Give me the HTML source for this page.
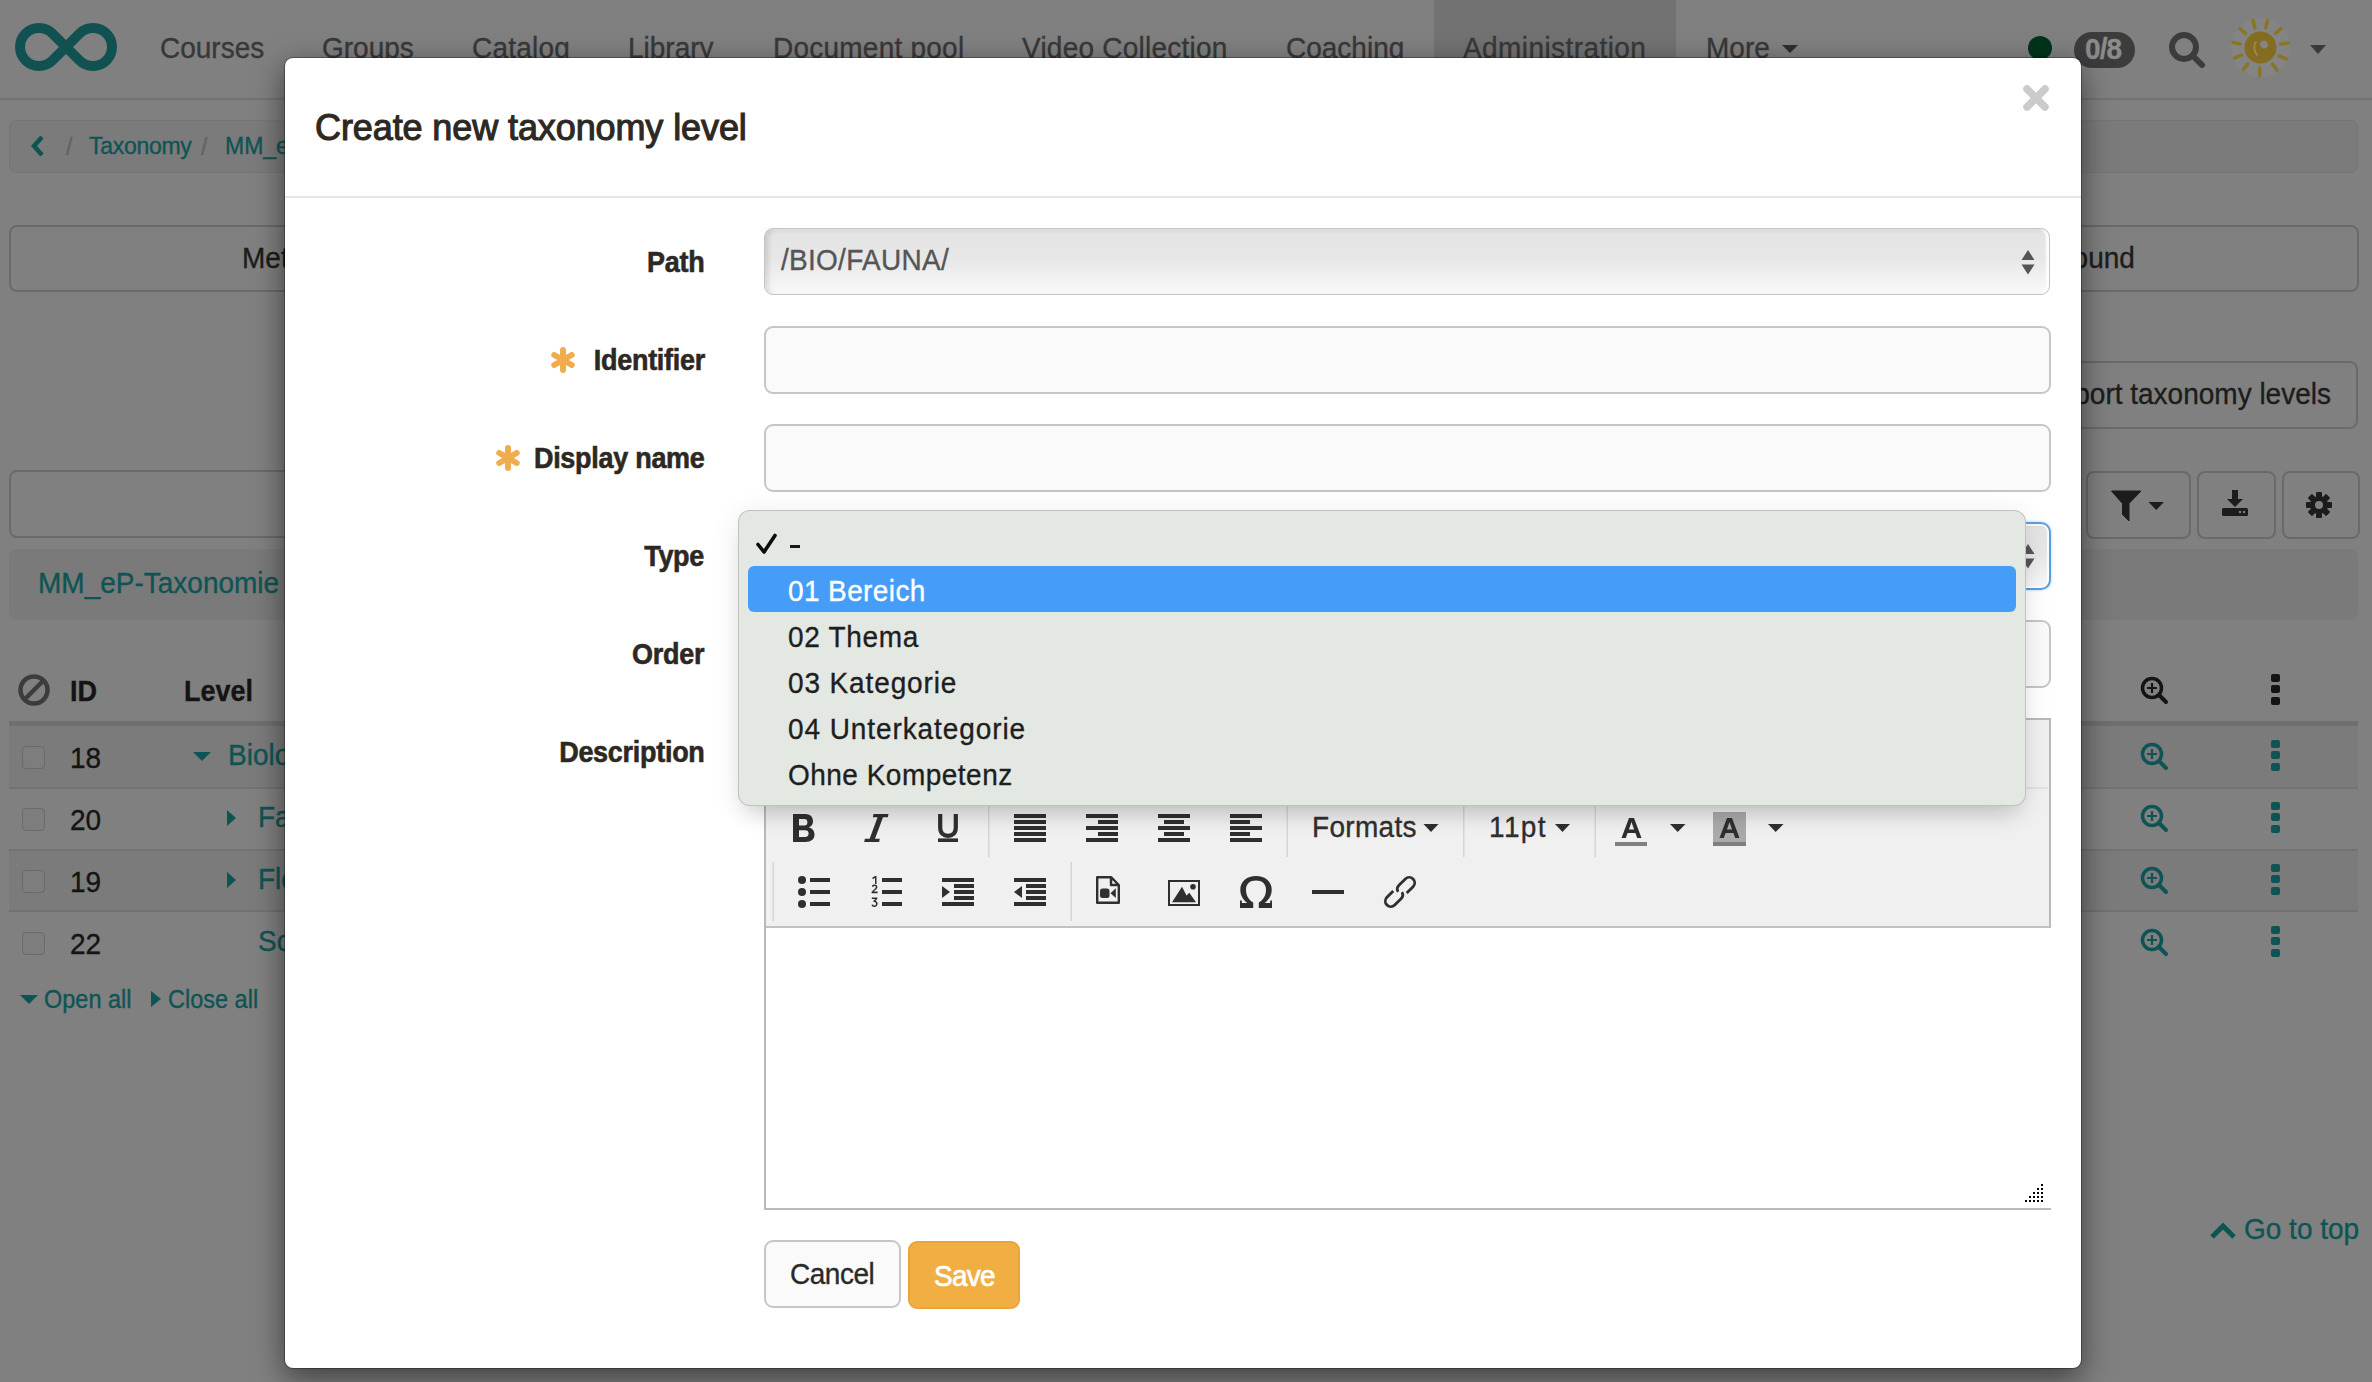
<!DOCTYPE html>
<html><head><meta charset="utf-8">
<style>
html,body{margin:0;padding:0;}
body{width:2372px;height:1382px;overflow:hidden;position:relative;background:#808080;font-family:"Liberation Sans",sans-serif;}
.a{position:absolute;}
.t{position:absolute;line-height:1;white-space:nowrap;-webkit-text-stroke:0.35px currentColor;}
#bg{position:absolute;left:0;top:0;width:2372px;height:1382px;background:#808080;}
.tl{color:#0f5454;}
.nav{font-size:29.96px;color:#383838;}
.lbl{right:1667.5px;font-size:28.89px;font-weight:700;color:#2e2823;letter-spacing:-0.3px;-webkit-text-stroke:0.6px #2e2823;}
.inp{left:764px;width:1283px;height:63.5px;border:2px solid #c6c6c6;border-radius:9px;background:#fafafa;}
.chk{left:22px;width:21px;height:21px;border:1.5px solid #6a6a6a;border-radius:4px;background:#7d7d7d;}
.num{left:70px;font-size:29.96px;color:#141414;}
.zm{left:2140px;}
.kb{left:2271px;width:9px;}
.kb i{display:block;width:9px;height:8px;border-radius:2px;background:currentColor;margin-bottom:3.3px;}
.dd{left:788px;font-size:29.96px;color:#1e1e1e;}
</style></head><body>
<div id="bg">
  <!-- navbar -->
  <div class="a" style="left:1434px;top:0;width:242px;height:97px;background:#727272"></div>
  <div class="a" style="left:0;top:98px;width:2372px;height:2px;background:#737373"></div>
  <svg class="a" style="left:0;top:0" width="130" height="96" viewBox="0 0 130 96">
    <path d="M52.4,33.5 L79.6,60.5 A19,19 0 1 0 79.6,33.5 L52.4,60.5 A19,19 0 1 1 52.4,33.5 Z" fill="none" stroke="#115151" stroke-width="10" stroke-linejoin="round"/>
  </svg>
  <div class="t nav" style="left:160px;top:35px;transform:scaleX(0.9346);transform-origin:left 0;margin-top:-0.0554em">Courses</div>
  <div class="t nav" style="left:322px;top:35px;transform:scaleX(0.9346);transform-origin:left 0;margin-top:-0.0554em">Groups</div>
  <div class="t nav" style="letter-spacing:0.25px;left:472px;top:35px;transform:scaleX(0.9346);transform-origin:left 0;margin-top:-0.0554em">Catalog</div>
  <div class="t nav" style="left:628px;top:35px;transform:scaleX(0.9346);transform-origin:left 0;margin-top:-0.0554em">Library</div>
  <div class="t nav" style="letter-spacing:0.25px;left:773px;top:35px;transform:scaleX(0.9346);transform-origin:left 0;margin-top:-0.0554em">Document pool</div>
  <div class="t nav" style="letter-spacing:0.25px;left:1022px;top:35px;transform:scaleX(0.9346);transform-origin:left 0;margin-top:-0.0554em">Video Collection</div>
  <div class="t nav" style="left:1286px;top:35px;transform:scaleX(0.9346);transform-origin:left 0;margin-top:-0.0554em">Coaching</div>
  <div class="t nav" style="left:1463px;top:35px;letter-spacing:0.45px;transform:scaleX(0.9346);transform-origin:left 0;margin-top:-0.0554em">Administration</div>
  <div class="t nav" style="left:1706px;top:35px;transform:scaleX(0.9346);transform-origin:left 0;margin-top:-0.0554em">More</div>
  <div class="a" style="left:1782px;top:45px;width:0;height:0;border-left:8px solid transparent;border-right:8px solid transparent;border-top:8px solid #2e2e2e"></div>
  <!-- right icons -->
  <div class="a" style="left:2028px;top:36px;width:24px;height:24px;border-radius:50%;background:#00331a"></div>
  <div class="a" style="left:2074px;top:32px;width:61px;height:36px;border-radius:18px;background:#3c3c3c"></div>
  <div class="t" style="left:2085px;top:36px;font-size:29.96px;font-weight:700;color:#8c8c8c;letter-spacing:-1px;transform:scaleX(0.9346);transform-origin:left 0;margin-top:-0.0554em">0/8</div>
  <svg class="a" style="left:2165px;top:28px" width="45" height="45" viewBox="0 0 45 45">
    <circle cx="19" cy="19" r="12" fill="none" stroke="#3c3c3c" stroke-width="6"/>
    <line x1="28" y1="28" x2="37" y2="37" stroke="#3c3c3c" stroke-width="6" stroke-linecap="round"/>
  </svg>
  <svg class="a" style="left:2225px;top:12px" width="72" height="72" viewBox="0 0 72 72">
    <circle cx="35.5" cy="35.5" r="29.5" fill="#848484"/>
    <g stroke="#8a7427" stroke-width="3.4" stroke-linecap="round"><line x1="30.0" y1="15.8" x2="28.0" y2="8.5"/><line x1="40.7" y1="15.7" x2="42.6" y2="8.4"/><line x1="20.4" y1="21.6" x2="14.9" y2="16.6"/><line x1="50.5" y1="21.5" x2="56.0" y2="16.4"/><line x1="15.3" y1="31.8" x2="8.0" y2="30.5"/><line x1="55.7" y1="32.2" x2="63.1" y2="31.0"/><line x1="16.5" y1="43.2" x2="9.5" y2="46.0"/><line x1="54.2" y1="43.9" x2="61.1" y2="46.9"/><line x1="22.9" y1="51.7" x2="18.3" y2="57.6"/><line x1="47.5" y1="52.1" x2="51.9" y2="58.2"/><line x1="34.9" y1="56.0" x2="34.6" y2="63.5"/></g>
    <circle cx="35.5" cy="35.5" r="16" fill="#846c21"/>
    <path d="M36.5,29.5 C39,28 42.5,29 43,32.5 C43.5,35.5 40.5,37.5 37.5,36 C35.5,35 35,33.5 34.5,32 Z" fill="#858585"/>
    <path d="M31,30 C28.5,33 28.5,38.5 32,43" fill="none" stroke="#9c8d5a" stroke-width="1.6" stroke-linecap="round"/>
  </svg>
  <div class="a" style="left:2310px;top:45px;width:0;height:0;border-left:8px solid transparent;border-right:8px solid transparent;border-top:9px solid #3a3a3a"></div>

  <!-- breadcrumb -->
  <div class="a" style="left:9px;top:120px;width:2347px;height:51px;border:1.5px solid #767676;border-radius:7px;background:#7b7b7b"></div>
  <svg class="a" style="left:28px;top:134px" width="20" height="24" viewBox="0 0 20 24">
    <path d="M14,3 L6,12 L14,21" fill="none" stroke="#0f5454" stroke-width="4.5"/>
  </svg>
  <div class="t" style="left:66px;top:136px;font-size:24.61px;color:#636363;transform:scaleX(0.9346);transform-origin:left 0;margin-top:-0.0554em">/</div>
  <div class="t tl" style="left:88.5px;top:135px;font-size:24.61px;letter-spacing:-0.3px;transform:scaleX(0.9346);transform-origin:left 0;margin-top:-0.0554em">Taxonomy</div>
  <div class="t" style="left:201px;top:136px;font-size:24.61px;color:#636363;transform:scaleX(0.9346);transform-origin:left 0;margin-top:-0.0554em">/</div>
  <div class="t tl" style="left:225px;top:135px;font-size:24.61px;transform:scaleX(0.9346);transform-origin:left 0;margin-top:-0.0554em">MM_eP-Taxonomie</div>

  <!-- button group -->
  <div class="a" style="left:9px;top:225px;width:2346px;height:63px;border:2px solid #6a6a6a;border-radius:8px"></div>
  <div class="t" style="left:242px;top:244.3px;font-size:29.96px;color:#1c1c1c;transform:scaleX(0.9346);transform-origin:left 0;margin-top:-0.0554em">Metadata</div>
  <div class="t" style="right:237px;top:244.3px;font-size:29.96px;color:#1c1c1c;transform:scaleX(0.9346);transform-origin:right 0;margin-top:-0.0554em">Background</div>

  <!-- import button -->
  <div class="a" style="left:1950px;top:361px;width:404px;height:64px;border:2px solid #6a6a6a;border-radius:8px"></div>
  <div class="t" style="right:41px;top:380.3px;font-size:29.96px;color:#1c1c1c;transform:scaleX(0.9346);transform-origin:right 0;margin-top:-0.0554em">Import taxonomy levels</div>

  <!-- search row -->
  <div class="a" style="left:9px;top:470px;width:2000px;height:64px;border:2px solid #6a6a6a;border-radius:8px"></div>
  <div class="a" style="left:2086px;top:471px;width:101px;height:64px;border:2px solid #6a6a6a;border-radius:8px"></div>
  <div class="a" style="left:2197px;top:471px;width:75px;height:64px;border:2px solid #6a6a6a;border-radius:8px"></div>
  <div class="a" style="left:2282px;top:471px;width:74px;height:64px;border:2px solid #6a6a6a;border-radius:8px"></div>
  <svg class="a" style="left:2108px;top:488px" width="60" height="34" viewBox="0 0 60 34">
    <path d="M3.5,3 L33,3 L21,15.5 L21,33 L14.5,26.5 L14.5,15.5 Z" fill="#1c1c1c" stroke="#1c1c1c" stroke-width="1" stroke-linejoin="round"/>
    <path d="M40.5,14 L56,14 L48.2,22 Z" fill="#1c1c1c"/>
  </svg>
  <svg class="a" style="left:2220px;top:489px" width="30" height="30" viewBox="0 0 30 30">
    <path d="M12,1 L18,1 L18,10 L23,10 L15,18 L7,10 L12,10 Z" fill="#1c1c1c"/>
    <rect x="2" y="19" width="26" height="8" rx="1.5" fill="#1c1c1c"/>
    <circle cx="20" cy="23" r="1.2" fill="#808080"/><circle cx="24" cy="23" r="1.2" fill="#808080"/>
  </svg>
  <svg class="a" style="left:2304px;top:490px" width="30" height="30" viewBox="0 0 30 30">
    <g fill="#1c1c1c">
      <circle cx="15" cy="15" r="9"/>
      <rect x="12" y="2" width="6" height="26" rx="1"/>
      <rect x="2" y="12" width="26" height="6" rx="1"/>
      <rect x="12" y="2" width="6" height="26" rx="1" transform="rotate(45 15 15)"/>
      <rect x="12" y="2" width="6" height="26" rx="1" transform="rotate(-45 15 15)"/>
    </g>
    <circle cx="15" cy="15" r="4" fill="#808080"/>
  </svg>

  <!-- gray bar -->
  <div class="a" style="left:9px;top:549px;width:2349px;height:71px;border-radius:8px;background:#7a7a7a"></div>
  <div class="t tl" style="left:38px;top:570px;font-size:29.96px;transform:scaleX(0.9346);transform-origin:left 0;margin-top:-0.0554em">MM_eP-Taxonomie</div>

  <!-- table -->
  <div class="a" style="left:9px;top:726px;width:2349px;height:61px;background:#7b7b7b"></div>
  <div class="a" style="left:9px;top:849px;width:2349px;height:61px;background:#7b7b7b"></div>
  <div class="a" style="left:9px;top:721px;width:2349px;height:5px;background:#6f6f6f"></div>
  <div class="a" style="left:9px;top:787px;width:2349px;height:1.5px;background:#727272"></div>
  <div class="a" style="left:9px;top:849px;width:2349px;height:1.5px;background:#727272"></div>
  <div class="a" style="left:9px;top:910px;width:2349px;height:1.5px;background:#727272"></div>
  <svg class="a" style="left:16px;top:672px" width="36" height="36" viewBox="0 0 36 36">
    <circle cx="18" cy="18" r="13.5" fill="none" stroke="#3c3c3c" stroke-width="4.5"/>
    <line x1="9" y1="27" x2="27" y2="9" stroke="#3c3c3c" stroke-width="4.5"/>
  </svg>
  <div class="t" style="left:70px;top:678.5px;font-size:28.89px;font-weight:700;color:#141414;transform:scaleX(0.9346);transform-origin:left 0;margin-top:-0.0554em">ID</div>
  <div class="t" style="left:184px;top:678.5px;font-size:28.89px;font-weight:700;color:#141414;transform:scaleX(0.9346);transform-origin:left 0;margin-top:-0.0554em">Level</div>
  <div class="a chk" style="top:746px"></div>
  <div class="a chk" style="top:808px"></div>
  <div class="a chk" style="top:870px"></div>
  <div class="a chk" style="top:932px"></div>
  <div class="t num" style="top:744.3px;transform:scaleX(0.9346);transform-origin:left 0;margin-top:-0.0554em">18</div>
  <div class="t num" style="top:806.3px;transform:scaleX(0.9346);transform-origin:left 0;margin-top:-0.0554em">20</div>
  <div class="t num" style="top:868.3px;transform:scaleX(0.9346);transform-origin:left 0;margin-top:-0.0554em">19</div>
  <div class="t num" style="top:930.3px;transform:scaleX(0.9346);transform-origin:left 0;margin-top:-0.0554em">22</div>
  <div class="a" style="left:193px;top:752px;width:0;height:0;border-left:9px solid transparent;border-right:9px solid transparent;border-top:9px solid #0f5454"></div>
  <div class="t tl" style="left:228px;top:742px;font-size:29.96px;transform:scaleX(0.9346);transform-origin:left 0;margin-top:-0.0554em">Biologie</div>
  <div class="a" style="left:227px;top:810px;width:0;height:0;border-top:8px solid transparent;border-bottom:8px solid transparent;border-left:9px solid #0f5454"></div>
  <div class="t tl" style="left:258px;top:804px;font-size:29.96px;transform:scaleX(0.9346);transform-origin:left 0;margin-top:-0.0554em">Fauna</div>
  <div class="a" style="left:227px;top:872px;width:0;height:0;border-top:8px solid transparent;border-bottom:8px solid transparent;border-left:9px solid #0f5454"></div>
  <div class="t tl" style="left:258px;top:866px;font-size:29.96px;transform:scaleX(0.9346);transform-origin:left 0;margin-top:-0.0554em">Flora</div>
  <div class="t tl" style="left:258px;top:928px;font-size:29.96px;transform:scaleX(0.9346);transform-origin:left 0;margin-top:-0.0554em">Sonstiges</div>

  <!-- zoom & kebab -->
  <svg class="a zm" style="top:676px" width="30" height="30" viewBox="0 0 30 30"><circle cx="12" cy="12" r="9.5" fill="none" stroke="#141414" stroke-width="3.5"/><path d="M12,7 V17 M7,12 H17" stroke="#141414" stroke-width="2.2"/><line x1="19" y1="19" x2="26" y2="26" stroke="#141414" stroke-width="4" stroke-linecap="round"/></svg>
  <svg class="a zm" style="top:742px" width="30" height="30" viewBox="0 0 30 30"><circle cx="12" cy="12" r="9.5" fill="none" stroke="#0f5454" stroke-width="3.5"/><path d="M12,7 V17 M7,12 H17" stroke="#0f5454" stroke-width="2.2"/><line x1="19" y1="19" x2="26" y2="26" stroke="#0f5454" stroke-width="4" stroke-linecap="round"/></svg>
  <svg class="a zm" style="top:804px" width="30" height="30" viewBox="0 0 30 30"><circle cx="12" cy="12" r="9.5" fill="none" stroke="#0f5454" stroke-width="3.5"/><path d="M12,7 V17 M7,12 H17" stroke="#0f5454" stroke-width="2.2"/><line x1="19" y1="19" x2="26" y2="26" stroke="#0f5454" stroke-width="4" stroke-linecap="round"/></svg>
  <svg class="a zm" style="top:866px" width="30" height="30" viewBox="0 0 30 30"><circle cx="12" cy="12" r="9.5" fill="none" stroke="#0f5454" stroke-width="3.5"/><path d="M12,7 V17 M7,12 H17" stroke="#0f5454" stroke-width="2.2"/><line x1="19" y1="19" x2="26" y2="26" stroke="#0f5454" stroke-width="4" stroke-linecap="round"/></svg>
  <svg class="a zm" style="top:928px" width="30" height="30" viewBox="0 0 30 30"><circle cx="12" cy="12" r="9.5" fill="none" stroke="#0f5454" stroke-width="3.5"/><path d="M12,7 V17 M7,12 H17" stroke="#0f5454" stroke-width="2.2"/><line x1="19" y1="19" x2="26" y2="26" stroke="#0f5454" stroke-width="4" stroke-linecap="round"/></svg>
  <div class="a kb" style="top:674px;color:#141414"><i></i><i></i><i></i></div>
  <div class="a kb" style="top:740px;color:#0f5454"><i></i><i></i><i></i></div>
  <div class="a kb" style="top:802px;color:#0f5454"><i></i><i></i><i></i></div>
  <div class="a kb" style="top:864px;color:#0f5454"><i></i><i></i><i></i></div>
  <div class="a kb" style="top:926px;color:#0f5454"><i></i><i></i><i></i></div>

  <!-- open/close all -->
  <div class="a" style="left:20px;top:995px;width:0;height:0;border-left:9px solid transparent;border-right:9px solid transparent;border-top:9px solid #0f5454"></div>
  <div class="t tl" style="left:44px;top:988.5px;font-size:25.15px;transform:scaleX(0.9346);transform-origin:left 0;margin-top:-0.0554em">Open all</div>
  <div class="a" style="left:151px;top:991px;width:0;height:0;border-top:8px solid transparent;border-bottom:8px solid transparent;border-left:10px solid #0f5454"></div>
  <div class="t tl" style="left:168px;top:988.5px;font-size:25.15px;transform:scaleX(0.9346);transform-origin:left 0;margin-top:-0.0554em">Close all</div>

  <!-- go to top -->
  <svg class="a" style="left:2208px;top:1220px" width="30" height="22" viewBox="0 0 30 22">
    <path d="M4,17 L15,6 L26,17" fill="none" stroke="#0f5454" stroke-width="5"/>
  </svg>
  <div class="t tl" style="left:2244px;top:1216.1px;font-size:29.96px;transform:scaleX(0.9346);transform-origin:left 0;margin-top:-0.0554em">Go to top</div>
</div>
<div class="a" style="left:284px;top:57px;width:1796px;height:1310px;background:#fff;background-clip:padding-box;border-radius:9px;border:1.5px solid rgba(0,0,0,.3);box-shadow:0 10px 30px rgba(0,0,0,.5)"></div>
<div class="t" style="left:315px;top:109.5px;font-size:36px;font-weight:400;color:#2e2823;letter-spacing:-0.1px;-webkit-text-stroke:1.1px #2e2823">Create new taxonomy level</div>
<svg class="a" style="left:2020px;top:82px" width="32" height="32" viewBox="0 0 32 32">
  <path d="M7,7 L25,25 M25,7 L7,25" stroke="#cbcbcb" stroke-width="7.5" stroke-linecap="round"/>
</svg>
<div class="a" style="left:285px;top:196px;width:1796px;height:1.5px;background:#e5e5e5"></div>

<!-- labels -->
<div class="t lbl" style="top:249.4px;transform:scaleX(0.9346);transform-origin:right 0;margin-top:-0.0554em">Path</div>
<div class="t lbl" style="top:347.4px;transform:scaleX(0.9346);transform-origin:right 0;margin-top:-0.0554em">Identifier</div>
<div class="t lbl" style="top:445.4px;transform:scaleX(0.9346);transform-origin:right 0;margin-top:-0.0554em">Display name</div>
<div class="t lbl" style="top:543.4px;transform:scaleX(0.9346);transform-origin:right 0;margin-top:-0.0554em">Type</div>
<div class="t lbl" style="top:641.4px;transform:scaleX(0.9346);transform-origin:right 0;margin-top:-0.0554em">Order</div>
<div class="t lbl" style="top:739.4px;transform:scaleX(0.9346);transform-origin:right 0;margin-top:-0.0554em">Description</div>

<svg class="a" style="left:549.5px;top:347px" width="26" height="26" viewBox="0 0 26 26"><g stroke="#f0ad4e" stroke-width="6" stroke-linecap="round"><line x1="13" y1="3" x2="13" y2="23"/><line x1="4.3" y1="8" x2="21.7" y2="18"/><line x1="4.3" y1="18" x2="21.7" y2="8"/></g></svg>
<svg class="a" style="left:494.5px;top:445px" width="26" height="26" viewBox="0 0 26 26"><g stroke="#f0ad4e" stroke-width="6" stroke-linecap="round"><line x1="13" y1="3" x2="13" y2="23"/><line x1="4.3" y1="8" x2="21.7" y2="18"/><line x1="4.3" y1="18" x2="21.7" y2="8"/></g></svg>
<!-- path select -->
<div class="a" style="left:764px;top:228px;width:1284px;height:65px;border:1.5px solid #c4c4c4;border-radius:9px;background:linear-gradient(#e4e4e4 0%,#e7e7e7 45%,#f9f9f9 100%);box-shadow:inset -3px 0 2px rgba(255,255,255,.9),inset 4px 1px 4px rgba(0,0,0,.10)"></div>
<div class="t" style="letter-spacing:0.3px;left:781px;top:247px;font-size:29.96px;color:#555;transform:scaleX(0.9346);transform-origin:left 0;margin-top:-0.0554em">/BIO/FAUNA/</div>
<svg class="a" style="left:2019px;top:246px" width="18" height="30" viewBox="0 0 18 30">
  <path d="M2.5,14 L9,4 L15.5,14 Z M2.5,18.5 L9,28.5 L15.5,18.5 Z" fill="#555"/>
</svg>

<!-- inputs -->
<div class="a inp" style="top:326px"></div>
<div class="a inp" style="top:424px"></div>
<!-- type select (focused) -->
<div class="a" style="left:764px;top:522px;width:1283px;height:64px;border:2px solid #5b9fe2;border-radius:10px;background:linear-gradient(#e4e4e4 0%,#e7e7e7 45%,#f9f9f9 100%);box-shadow:inset 0 0 0 2px rgba(255,255,255,.85),inset 4px 1px 4px rgba(0,0,0,.10),0 0 3px rgba(91,159,226,.5)"></div>
<svg class="a" style="left:2019px;top:540px" width="18" height="30" viewBox="0 0 18 30">
  <path d="M2.5,14 L9,4 L15.5,14 Z M2.5,18.5 L9,28.5 L15.5,18.5 Z" fill="#555"/>
</svg>
<div class="a inp" style="top:620px"></div>

<!-- editor -->
<div class="a" style="left:764px;top:718px;width:1283px;height:206px;border:2px solid #b9b9b9;border-bottom:2px solid #c2c2c2;background:#f0f0f0"></div>
<div class="a" style="left:766px;top:787px;width:1282px;height:1.5px;background:#e2e2e2"></div>
<div class="a" style="left:764px;top:926px;width:2px;height:284px;background:#b9b9b9"></div>
<div class="a" style="left:764px;top:1208px;width:1287px;height:2px;background:#bababa"></div>
<!-- resize grip -->
<svg class="a" style="left:2024px;top:1183px" width="21" height="21" viewBox="0 0 21 21">
  <g fill="#000">
    <rect x="17" y="1" width="2" height="2"/>
    <rect x="13" y="5" width="2" height="2"/><rect x="17" y="5" width="2" height="2"/>
    <rect x="9" y="9" width="2" height="2"/><rect x="13" y="9" width="2" height="2"/><rect x="17" y="9" width="2" height="2"/>
    <rect x="5" y="13" width="2" height="2"/><rect x="9" y="13" width="2" height="2"/><rect x="13" y="13" width="2" height="2"/><rect x="17" y="13" width="2" height="2"/>
    <rect x="1" y="17" width="2" height="2"/><rect x="5" y="17" width="2" height="2"/><rect x="9" y="17" width="2" height="2"/><rect x="13" y="17" width="2" height="2"/><rect x="17" y="17" width="2" height="2"/>
  </g>
</svg>

<!-- buttons -->
<div class="a" style="left:764px;top:1240px;width:133px;height:64px;border:2px solid #c6c6c6;border-radius:9px;background:#fafafa"></div>
<div class="t" style="left:790px;top:1260.2px;font-size:29.96px;color:#2a2a2a;letter-spacing:-0.5px;transform:scaleX(0.9346);transform-origin:left 0;margin-top:-0.0554em">Cancel</div>
<div class="a" style="left:908px;top:1241px;width:108px;height:64px;border:2px solid #eba43c;border-radius:9px;background:#f1ae42"></div>
<div class="t" style="left:934px;top:1262.8px;font-size:29.96px;color:#fff;font-weight:400;letter-spacing:-0.8px;-webkit-text-stroke:0.7px #fff;transform:scaleX(0.9346);transform-origin:left 0;margin-top:-0.0554em">Save</div>
<svg class="a" style="left:0;top:0" width="2372" height="1382" viewBox="0 0 2372 1382">
 <g fill="#2f2f2f">
  <!-- separators -->
  <rect x="988" y="806" width="1.5" height="51" fill="#d6d6d6"/>
  <rect x="1286.5" y="806" width="1.5" height="51" fill="#d6d6d6"/>
  <rect x="1463" y="806" width="1.5" height="51" fill="#d6d6d6"/>
  <rect x="1594.5" y="806" width="1.5" height="51" fill="#d6d6d6"/>
  <rect x="772.5" y="862" width="1.5" height="59" fill="#d6d6d6"/>
  <rect x="1070.5" y="862" width="1.5" height="59" fill="#d6d6d6"/>
  <!-- B -->
  <path fill-rule="evenodd" d="M793,814 H805 C810.5,814 813,817.2 813,821.2 C813,824.5 811.2,826.4 808.8,827.2 C812,828 814.5,830.6 814.5,834.6 C814.5,839.4 811,842 805.5,842 H793 Z M799,819 V825.5 H804.3 C806.4,825.5 807.4,824.3 807.4,822.2 C807.4,820.2 806.4,819 804.3,819 Z M799,830.2 V837 H805 C807.4,837 808.6,835.8 808.6,833.6 C808.6,831.4 807.4,830.2 805,830.2 Z"/>
  <!-- I -->
  <path d="M873.5,814 H888.5 L887.8,817.2 H883 L875,838.8 H879.8 L879.1,842 H864.2 L864.9,838.8 H869.6 L877.6,817.2 H872.8 Z"/>
  <!-- U -->
  <path d="M940.2,814 V827.5 C940.2,833.2 943.5,835.8 948,835.8 C952.5,835.8 955.8,833.2 955.8,827.5 V814" fill="none" stroke="#2f2f2f" stroke-width="4.2"/>
  <rect x="938" y="838.4" width="20" height="3.6"/>
  <!-- justify -->
  <rect x="1014" y="814" width="32" height="4"/><rect x="1014" y="820" width="32" height="4"/><rect x="1014" y="826" width="32" height="4"/><rect x="1014" y="832" width="32" height="4"/><rect x="1014" y="838" width="32" height="4"/>
  <!-- right -->
  <rect x="1086" y="814" width="32" height="4"/><rect x="1098" y="820" width="20" height="4"/><rect x="1086" y="826" width="32" height="4"/><rect x="1098" y="832" width="20" height="4"/><rect x="1086" y="838" width="32" height="4"/>
  <!-- center -->
  <rect x="1158" y="814" width="32" height="4"/><rect x="1164" y="820" width="20" height="4"/><rect x="1158" y="826" width="32" height="4"/><rect x="1164" y="832" width="20" height="4"/><rect x="1158" y="838" width="32" height="4"/>
  <!-- left -->
  <rect x="1230" y="814" width="32" height="4"/><rect x="1230" y="820" width="20" height="4"/><rect x="1230" y="826" width="32" height="4"/><rect x="1230" y="832" width="20" height="4"/><rect x="1230" y="838" width="32" height="4"/>
  <!-- carets -->
  <path d="M1423.5,824 H1438.5 L1431,832 Z"/>
  <path d="M1555,824 H1570 L1562.5,832 Z"/>
  <path d="M1670,824 H1685.5 L1677.7,832 Z"/>
  <path d="M1768,824 H1783.5 L1775.7,832 Z"/>
  <!-- A forecolor -->
  <path d="M1629,818 H1634 L1641.5,838 H1637.2 L1635.4,833 H1627.6 L1625.8,838 H1621.5 Z M1628.9,829.4 H1634.1 L1631.5,822 Z" fill-rule="evenodd"/>
  <rect x="1615" y="842" width="32" height="4" fill="#808080"/>
  <!-- A backcolor -->
  <rect x="1713" y="812" width="33" height="34" fill="#aaaaaa"/>
  <path d="M1727,818 H1732 L1739.5,838 H1735.2 L1733.4,833 H1725.6 L1723.8,838 H1719.5 Z M1726.9,829.4 H1732.1 L1729.5,822 Z" fill-rule="evenodd"/>
  <rect x="1713" y="842" width="33" height="4" fill="#7f7f7f"/>

  <!-- bullet list -->
  <circle cx="802" cy="880" r="4"/><circle cx="802" cy="892" r="4"/><circle cx="802" cy="904" r="4"/>
  <rect x="810" y="878" width="20" height="4"/><rect x="810" y="890" width="20" height="4"/><rect x="810" y="902" width="20" height="4"/>
  <!-- num list -->
  <path d="M872.5,877.5 L875,876 H876.5 V884 H875 V878 L872.5,879.2 Z"/>
  <path d="M871.8,886.5 C872,885 873.3,884.6 874.6,884.6 C876.3,884.6 877.4,885.6 877.4,887 C877.4,888.5 876,889.4 874.2,891 L873.5,891.6 H877.6 V893.2 H871.6 V891.8 L873.8,889.8 C875.3,888.5 875.8,887.9 875.8,887.1 C875.8,886.4 875.3,886 874.6,886 C873.9,886 873.4,886.4 873.3,887 Z"/>
  <path d="M871.8,897.5 H877.3 V899 L875.3,900.9 C876.7,901 877.6,902 877.6,903.6 C877.6,905.6 876.2,907 874.4,907 C872.8,907 871.7,906.2 871.5,904.8 L873,904.5 C873.2,905.2 873.7,905.5 874.4,905.5 C875.3,905.5 876,904.8 876,903.7 C876,902.6 875.2,902 874.1,902 H873.4 V900.8 L875.3,899 H871.8 Z"/>
  <rect x="882" y="878" width="20" height="4"/><rect x="882" y="890" width="20" height="4"/><rect x="882" y="902" width="20" height="4"/>
  <!-- indent -->
  <rect x="942" y="878" width="32" height="4"/><rect x="954" y="884" width="20" height="4"/><rect x="954" y="890" width="20" height="4"/><rect x="954" y="896" width="20" height="4"/><rect x="942" y="902" width="32" height="4"/>
  <path d="M942,886 L950,892 L942,898 Z"/>
  <!-- outdent -->
  <rect x="1014" y="878" width="32" height="4"/><rect x="1026" y="884" width="20" height="4"/><rect x="1026" y="890" width="20" height="4"/><rect x="1026" y="896" width="20" height="4"/><rect x="1014" y="902" width="32" height="4"/>
  <path d="M1022,886 L1014,892 L1022,898 Z"/>
  <!-- media -->
  <path d="M1097.2,877.2 H1111 L1118.8,885 V902.8 H1097.2 Z M1111,877.2 V885 H1118.8" fill="none" stroke="#2f2f2f" stroke-width="2.4" stroke-linejoin="round"/>
  <rect x="1100" y="888.4" width="9.5" height="9.7" rx="2.5"/>
  <path d="M1110.5,893.2 L1115.8,888.3 V898.1 Z"/>
  <!-- image -->
  <rect x="1169" y="881" width="30" height="24" fill="none" stroke="#2f2f2f" stroke-width="2"/>
  <path d="M1172,902.2 L1182,886.7 L1186.5,895.5 L1189.3,892.8 L1196,902.2 Z"/>
  <circle cx="1193" cy="886.7" r="2.8"/>
  <!-- omega -->
  <path d="M1240,908 V900.5 H1241.8 V903 H1247.3 C1243,899.8 1240.3,895.5 1240.3,889.8 C1240.3,881.3 1247,876 1256,876 C1265,876 1271.7,881.3 1271.7,889.8 C1271.7,895.5 1269,899.8 1264.7,903 H1270.2 V900.5 H1272 V908 H1258.8 V902.5 C1263.3,900 1266,895.6 1266,889.8 C1266,883.6 1262,880.5 1256,880.5 C1250,880.5 1246,883.6 1246,889.8 C1246,895.6 1248.7,900 1253.2,902.5 V908 Z"/>
  <!-- hr -->
  <rect x="1312" y="890" width="32" height="4"/>
  <!-- link -->
  <g transform="rotate(-45 1400 892)" fill="none" stroke="#2f2f2f" stroke-width="2.8">
    <path d="M1396,886.5 H1387 A5.5,5.5 0 0 0 1387,897.5 H1396 A5.5,5.5 0 0 0 1401.3,893.5"/>
    <path d="M1404,897.5 H1413 A5.5,5.5 0 0 0 1413,886.5 H1404 A5.5,5.5 0 0 0 1398.7,890.5"/>
  </g>
 </g>
</svg>
<div class="t" style="left:1312px;top:814px;font-size:29.96px;color:#2f2f2f;letter-spacing:0.35px;transform:scaleX(0.9346);transform-origin:left 0;margin-top:-0.0554em">Formats</div>
<div class="t" style="left:1489px;top:814px;font-size:29.96px;color:#2f2f2f;letter-spacing:1.5px;transform:scaleX(0.9346);transform-origin:left 0;margin-top:-0.0554em">11pt</div>
<div class="a" style="left:738px;top:510px;width:1288px;height:296px;border-radius:12px;background:#e4e8e3;border:1px solid rgba(0,0,0,.16);box-sizing:border-box;box-shadow:0 4px 30px rgba(0,0,0,.09),0 16px 22px -10px rgba(0,0,0,.16)"></div>
<div class="a" style="left:748px;top:566px;width:1268px;height:46px;border-radius:6px;background:#469df8"></div>
<svg class="a" style="left:754px;top:532px" width="26" height="24" viewBox="0 0 26 24">
  <path d="M4,12.5 L10,20 L21,3.5" fill="none" stroke="#0c0c0c" stroke-width="3.6" stroke-linecap="round" stroke-linejoin="round"/>
</svg>
<div class="a" style="left:790px;top:545px;width:10px;height:2.5px;background:#1a1a1a"></div>
<div class="t dd" style="letter-spacing:0.42px;top:577.7px;color:#fff;transform:scaleX(0.9346);transform-origin:left 0;margin-top:-0.0554em">01 Bereich</div>
<div class="t dd" style="letter-spacing:0.72px;top:623.5px;transform:scaleX(0.9346);transform-origin:left 0;margin-top:-0.0554em">02 Thema</div>
<div class="t dd" style="letter-spacing:0.94px;top:669.5px;transform:scaleX(0.9346);transform-origin:left 0;margin-top:-0.0554em">03 Kategorie</div>
<div class="t dd" style="letter-spacing:0.98px;top:715.5px;transform:scaleX(0.9346);transform-origin:left 0;margin-top:-0.0554em">04 Unterkategorie</div>
<div class="t dd" style="letter-spacing:0.52px;top:761.2px;transform:scaleX(0.9346);transform-origin:left 0;margin-top:-0.0554em">Ohne Kompetenz</div>
</body></html>
